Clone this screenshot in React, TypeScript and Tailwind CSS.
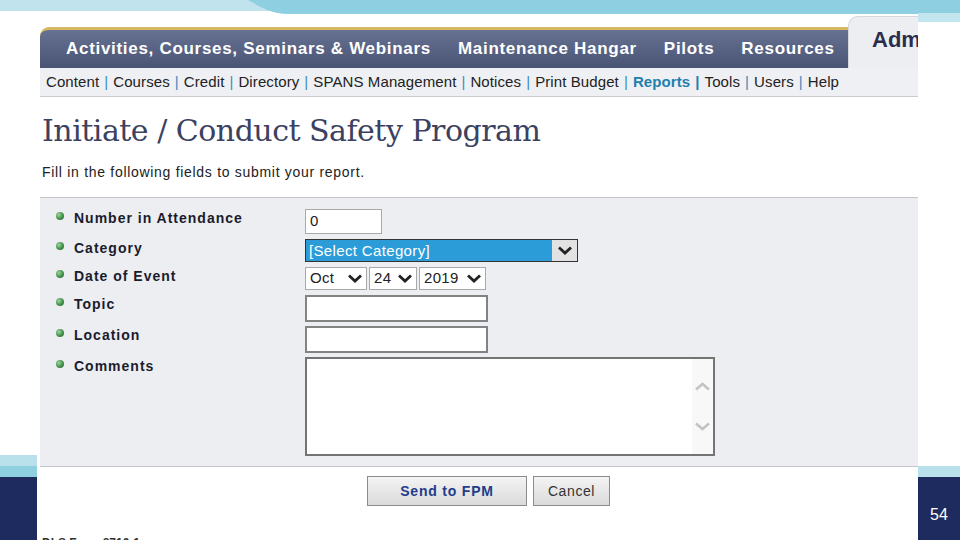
import React from 'react';

const navItems = ['Activities, Courses, Seminars & Webinars', 'Maintenance Hangar', 'Pilots', 'Resources'];
const subItems = ['Content', 'Courses', 'Credit', 'Directory', 'SPANS Management', 'Notices', 'Print Budget', 'Reports', 'Tools', 'Users', 'Help'];

function Chevron({ className = '', w = 12, h = 8, sw = 2.4 }: { className?: string; w?: number; h?: number; sw?: number }) {
  return (
    <svg width={w} height={h} viewBox={`0 0 ${w} ${h}`} className={className}>
      <path d={`M1 1.5 L${w / 2} ${h - 2} L${w - 1} 1.5`} fill="none" stroke="currentColor" strokeWidth={sw} />
    </svg>
  );
}

function Bullet() {
  return <span className="mt-[2px] mr-[10px] block h-[8px] w-[8px] shrink-0 rounded-full bg-[radial-gradient(circle_at_35%_35%,#9bd59b,#3d8a45_60%,#2a5e30)]" />;
}

function Row({ label, children, mt }: { label: string; children: React.ReactNode; mt: string }) {
  return (
    <div className={`flex shrink-0 ${mt}`}>
      <div className="flex w-[265px] items-start pl-[16px] pt-[1px]">
        <Bullet />
        <span className="text-[14px] leading-4 font-bold tracking-[1px] text-[#1b1c2c]">{label}</span>
      </div>
      {children}
    </div>
  );
}

function DateSelect({ value, w }: { value: string; w: string }) {
  return (
    <div className={`flex h-[23px] ${w} items-center justify-between border border-[#a9a9a9] bg-white pl-[4px] pr-[4px] text-[15px] tracking-[0.3px] text-[#222]`}>
      <span>{value}</span>
      <Chevron className="text-[#222]" w={14} h={9} sw={2.8} />
    </div>
  );
}

export default function App() {
  return (
    <div className="relative h-[540px] w-[960px] overflow-hidden bg-white font-['Liberation_Sans',Arial,sans-serif]">
      <div className="flex h-full">
        {/* left slide strip */}
        <div className="flex w-[37px] flex-col">
          <div className="flex-1" />
          <div className="h-[11px] bg-[#b9e1eb]" />
          <div className="h-[11px] bg-[#8ecfe0]" />
          <div className="h-[63px] bg-[#1d2b5f]" />
        </div>
        <div className="w-[3px]" />

        {/* screenshot */}
        <div className="flex w-[878px] flex-col pt-[16px]">
          <div className="flex h-[52px] shrink-0 items-end">
            <div className="flex h-[41px] w-[808px] shrink-0 items-center gap-[27px] overflow-hidden rounded-tl-[9px] border-t-[3px] border-[#d7b862] bg-gradient-to-b from-[#677192] to-[#4a5576] pl-[26px] pb-[1px] text-[17px] font-bold tracking-[0.7px] text-white">
              {navItems.map((n) => (
                <span key={n} className="whitespace-nowrap">{n}</span>
              ))}
            </div>
            <div className="h-[52px] w-[70px] shrink-0 overflow-hidden rounded-tl-[10px] border-l border-t border-[#d4d7de] bg-[#eceef2] pl-[23px] pt-[10px] text-[22px] leading-[26px] font-bold whitespace-nowrap text-[#2a2e4c]">
              Adm
            </div>
          </div>
          <div className="flex h-[29px] shrink-0 items-center border-b border-[#c9cbd0] bg-[#eef0f3] pl-[6px] text-[15px] tracking-[0.1px] text-[#222]">
            {subItems.map((s, i) => (
              <span key={s} className="whitespace-nowrap">
                {i > 0 && (
                  <span className={subItems[i - 1] === 'Reports' ? 'mx-[5px] font-bold text-[#1f7fae]' : 'mx-[5px] text-[#3d8bbd]'}>|</span>
                )}
                <span className={s === 'Reports' ? 'font-bold text-[#1f7fae]' : ''}>{s}</span>
              </span>
            ))}
          </div>

          <div className="h-[100px] shrink-0 pl-[2px]">
            <h1 className="pt-[16px] font-['DejaVu_Serif',Georgia,serif] text-[30px] leading-[36px] tracking-[-0.5px] text-[#3b4160]">
              Initiate / Conduct Safety Program
            </h1>
            <p className="mt-[15px] text-[14px] leading-4 tracking-[0.7px] text-[#222]">Fill in the following fields to submit your report.</p>
          </div>

          <div className="flex h-[270px] shrink-0 flex-col border-y border-[#c4c6ca] bg-[#eceef2] pt-[11px]">
            <Row label="Number in Attendance" mt="mt-0">
              <div className="flex h-[25px] w-[77px] items-center border border-[#a9a9a9] bg-white pl-[4px] text-[15px] text-[#222]">0</div>
            </Row>
            <Row label="Category" mt="mt-[5px]">
              <div className="flex h-[23px] w-[273px] border border-[#333] bg-[#2b9cd8]">
                <span className="flex-1 pl-[3px] text-[15px] leading-[21px] tracking-[0.35px] text-white">[Select Category]</span>
                <span className="flex w-[25px] items-center justify-center bg-[#e2e2e2] text-[#222]">
                  <Chevron w={14} h={9} sw={2.8} />
                </span>
              </div>
            </Row>
            <Row label="Date of Event" mt="mt-[5px]">
              <div className="flex gap-[2px]">
                <DateSelect value="Oct" w="w-[62px]" />
                <DateSelect value="24" w="w-[48px]" />
                <DateSelect value="2019" w="w-[67px]" />
              </div>
            </Row>
            <Row label="Topic" mt="mt-[5px]">
              <div className="h-[27px] w-[183px] border-2 border-[#838383] bg-white" />
            </Row>
            <Row label="Location" mt="mt-[4px]">
              <div className="h-[27px] w-[183px] border-2 border-[#838383] bg-white" />
            </Row>
            <Row label="Comments" mt="mt-[4px]">
              <div className="flex h-[99px] w-[410px] border-2 border-[#747474] bg-white">
                <div className="flex-1" />
                <div className="flex w-[21px] flex-col items-center justify-between bg-[#f8f8f8] py-[23px] text-[#c3c3c3]">
                  <Chevron className="rotate-180" w={15} h={9} sw={2.6} />
                  <Chevron w={15} h={9} sw={2.6} />
                </div>
              </div>
            </Row>
          </div>

          <div className="flex shrink-0 gap-[6px] pl-[327px] pt-[9px]">
            <button className="h-[30px] w-[160px] border border-[#8c8c8c] bg-gradient-to-b from-[#f4f4f4] to-[#dadada] text-[14px] font-bold tracking-[0.8px] text-[#223d8a]">
              Send to FPM
            </button>
            <button className="h-[30px] w-[77px] border border-[#8c8c8c] bg-gradient-to-b from-[#f4f4f4] to-[#dadada] text-[14px] tracking-[0.6px] text-[#333]">
              Cancel
            </button>
          </div>
          <div className="mt-[29px] shrink-0 pl-[2px] text-[12px] leading-4 font-bold whitespace-nowrap text-[#333]">DLS Form 8710-1</div>
        </div>

        {/* right slide strip */}
        <div className="flex w-[42px] flex-col">
          <div className="flex-1" />
          <div className="h-[11px] bg-[#b9e1eb]" />
          <div className="flex h-[63px] items-center justify-center bg-[#1d2b5f] pt-[13px] text-[16px] text-white">54</div>
        </div>
      </div>

      {/* slide header wave */}
      <svg className="absolute left-0 top-0" width="960" height="24" viewBox="0 0 960 24">
        <rect x="0" y="0" width="960" height="11" fill="#c0e3ed" />
        <path d="M248 0 C262 8 270 13 288 14 L960 14 L960 0 Z" fill="#8ed0e2" />
        <rect x="918" y="13" width="42" height="9" fill="#c3e5ee" />
      </svg>
    </div>
  );
}
